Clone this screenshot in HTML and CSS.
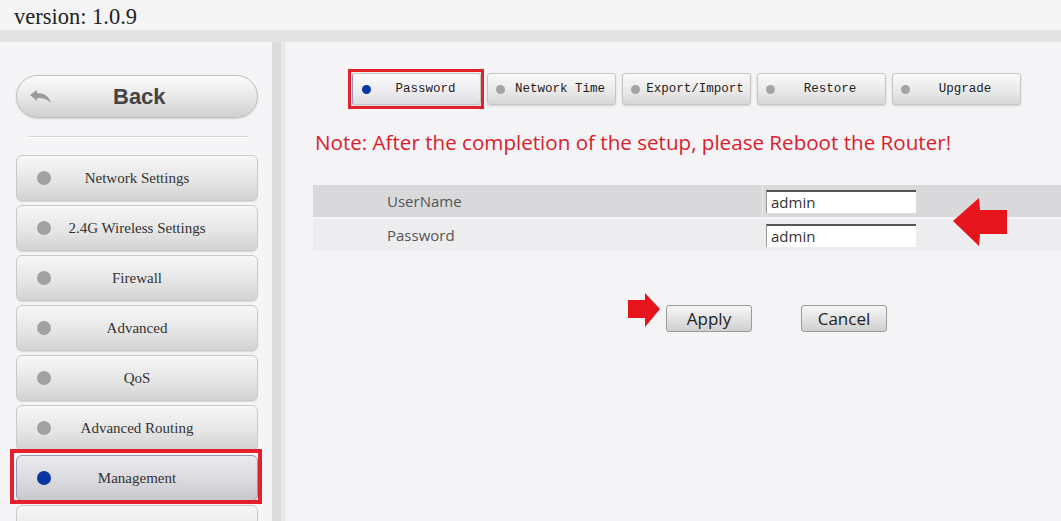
FILE: index.html
```html
<!DOCTYPE html>
<html lang="en">
<head>
  <meta charset="UTF-8">
  <title>Management - Password</title>
  <link rel="stylesheet" href="styles.css">
</head>
<body>

<div class="top-bar">version: 1.0.9</div>
<div class="top-band"></div>

<div class="main">
  <!-- Left menu -->
  <div class="sidebar">
    <button class="back-btn">
      <svg class="back-icon" width="22" height="14" viewBox="0 0 22 14">
        <path d="M0 5 L7 0 L7 3 C14 3 19 6 21 13 C17 9 13 8 7 8 L7 11 Z" fill="#9b9b9b"/>
      </svg>
      Back
    </button>
    <div class="side-sep"></div>

    <div class="menu-item"><span class="dot"></span><span class="menu-text">Network Settings</span></div>
    <div class="menu-item"><span class="dot"></span><span class="menu-text">2.4G Wireless Settings</span></div>
    <div class="menu-item"><span class="dot"></span><span class="menu-text">Firewall</span></div>
    <div class="menu-item"><span class="dot"></span><span class="menu-text">Advanced</span></div>
    <div class="menu-item"><span class="dot"></span><span class="menu-text">QoS</span></div>
    <div class="menu-item"><span class="dot"></span><span class="menu-text">Advanced Routing</span></div>
    <div class="menu-item active marked"><span class="dot"></span><span class="menu-text">Management</span></div>
    <div class="menu-item"><span class="dot"></span></div>
  </div>

  <div class="divider"></div>

  <!-- Page content -->
  <div class="content">
    <div class="tabs">
      <div class="tab active marked"><span class="tab-dot"></span><span class="tab-text">Password</span></div>
      <div class="tab"><span class="tab-dot"></span><span class="tab-text">Network Time</span></div>
      <div class="tab"><span class="tab-dot"></span><span class="tab-text">Export/Import</span></div>
      <div class="tab"><span class="tab-dot"></span><span class="tab-text">Restore</span></div>
      <div class="tab"><span class="tab-dot"></span><span class="tab-text">Upgrade</span></div>
    </div>

    <p class="note">Note: After the completion of the setup, please Reboot the Router!</p>

    <table class="form-table">
      <tr class="row-dark">
        <td class="label-cell">UserName</td>
        <td class="input-cell"><input type="text" value="admin"></td>
      </tr>
      <tr class="row-light">
        <td class="label-cell">Password</td>
        <td class="input-cell"><input type="text" value="admin"></td>
      </tr>
    </table>

    <div class="actions">
      <button class="btn">Apply</button>
      <button class="btn">Cancel</button>
    </div>

    <!-- red pointers -->
    <svg class="pointer pointer-left" width="56" height="50" viewBox="0 0 56 50">
      <path d="M1 24 L27 1 L28 13 L55 13 L55 37 L28 37 L27 49 Z" fill="#e5141d"/>
    </svg>
    <svg class="pointer pointer-right" width="34" height="36" viewBox="0 0 34 36">
      <path d="M1 8 L18 8 L18 1 L33 17 L18 35 L18 26 L1 26 Z" fill="#e5141d"/>
    </svg>
  </div>
</div>

</body>
</html>
```

FILE: styles.css
```css
body {
  margin: 0;
  background-color: #f4f4f6;
  overflow: hidden;
}

.top-bar {
  height: 30px;
  background-color: #f4f4f4;
  font-family: "Liberation Serif", serif;
  font-size: 22.5px;
  color: #222;
  padding-left: 14px;
  line-height: 34px;
  overflow: visible;
}

.top-band {
  height: 12px;
  background-color: #e3e3e3;
}

.main {
  display: flex;
  height: 479px;
}

.sidebar {
  width: 242px;
  padding: 33px 14px 0 16px;
  background-color: #f5f5f7;
  overflow: hidden;
}

.divider {
  width: 9px;
  background-color: #dcdcdc;
  border-right: 4px solid #e9e9eb;
}

.back-btn {
  display: flex;
  align-items: center;
  width: 242px;
  height: 43px;
  border: 1px solid #bdbdbd;
  border-radius: 22px;
  background: linear-gradient(#fbfbfb, #e6e6e6 55%, #cfcfcf);
  font-family: "Liberation Sans", sans-serif;
  font-weight: bold;
  font-size: 22px;
  color: #444;
  padding: 0 0 0 13px;
  box-shadow: 0 1px 2px rgba(0, 0, 0, 0.15);
}

.back-icon {
  margin-right: 61px;
}

.side-sep {
  margin: 18px 10px 17px 12px;
  height: 1px;
  background-color: #d6d6d6;
  border-bottom: 1px solid #fff;
}

.menu-item {
  display: flex;
  align-items: center;
  height: 44px;
  margin-bottom: 4px;
  border: 1px solid #c9c9c9;
  border-radius: 6px;
  background: linear-gradient(#f7f7f7, #e4e4e4 60%, #d3d3d3);
  font-family: "Liberation Serif", serif;
  font-size: 15px;
  color: #333;
  padding-left: 20px;
  box-shadow: 0 1px 1px rgba(0, 0, 0, 0.12);
}

.dot {
  width: 14px;
  height: 14px;
  border-radius: 50%;
  background-color: #a2a2a2;
}

.menu-text {
  flex: 1;
  text-align: center;
  margin-right: 34px;
}

.menu-item.active {
  border-color: #9598ac;
  background: linear-gradient(#ebebef, #d9d9dd 60%, #c8c8cc);
}

.menu-item.active .dot {
  background-color: #0a36a2;
}

/* square red frame drawn over the highlighted item */
.marked {
  position: relative;
}

.marked::after {
  content: "";
  position: absolute;
  top: -7px;
  left: -7px;
  right: -5px;
  bottom: -4px;
  border: 4px solid #e3202b;
}

.content {
  flex: 1;
  position: relative;
  padding: 31px 0 0 28px;
}

.tabs {
  display: flex;
  gap: 6px;
  margin-left: 39px;
}

.tab {
  display: flex;
  align-items: center;
  width: 129px;
  height: 32px;
  border: 1px solid #c6c6c6;
  border-radius: 3px;
  background: linear-gradient(#f9f9f9, #e8e8e8 60%, #d6d6d6);
  font-family: "Liberation Mono", monospace;
  font-size: 12.5px;
  color: #222;
  padding-left: 8px;
  box-sizing: border-box;
  box-shadow: 0 1px 2px rgba(0, 0, 0, 0.15);
}

.tab-dot {
  width: 9px;
  height: 9px;
  border-radius: 50%;
  background-color: #a4a4a4;
}

.tab-text {
  flex: 1;
  text-align: center;
}

.tab.active {
  border-left-color: #8c95c0;
  background: linear-gradient(#fbfbfd, #ececf0 60%, #dcdce2);
  padding-left: 9px;
}

.tab.active .tab-dot {
  background-color: #0a36a2;
}

.tab.marked::after {
  top: -5px;
  left: -5px;
  right: -4px;
  bottom: -5px;
  border-width: 3px;
}

.note {
  margin: 25px 0 0 2px;
  font-family: "Open Sans", sans-serif;
  font-size: 20.6px;
  line-height: 24px;
  color: #d9202c;
}

.form-table {
  margin-top: 29px;
  width: 100%;
  border-collapse: separate;
  border-spacing: 0 2px;
  font-family: "Open Sans", sans-serif;
  font-size: 15px;
  color: #555;
}

.form-table td {
  height: 32px;
  padding: 0;
}

.row-dark td {
  background-color: #d9d9db;
}

.row-light td {
  background-color: #ededef;
}

.label-cell {
  width: 375px;
  padding-left: 74px !important;
  border-right: 1px solid #ececee;
}

.input-cell input {
  width: 150px;
  height: 23px;
  margin-left: 3px;
  box-sizing: border-box;
  border: none;
  border-top: 2px solid #555;
  border-left: 1px solid #999;
  background-color: #fff;
  font-family: "Open Sans", sans-serif;
  font-size: 15px;
  color: #333;
  padding: 0 4px;
}

.actions {
  display: flex;
  gap: 49px;
  margin: 52px 0 0 353px;
}

.btn {
  width: 86px;
  height: 27px;
  border: 1px solid #9a9a9a;
  border-radius: 3px;
  background: linear-gradient(#f6f6f6, #e3e3e3 50%, #cfcfcf);
  font-family: "Open Sans", sans-serif;
  font-size: 17px;
  color: #222;
  padding: 0;
}

.pointer {
  position: absolute;
}

.pointer-left {
  left: 667px;
  top: 155px;
}

.pointer-right {
  left: 342px;
  top: 250px;
}
```
